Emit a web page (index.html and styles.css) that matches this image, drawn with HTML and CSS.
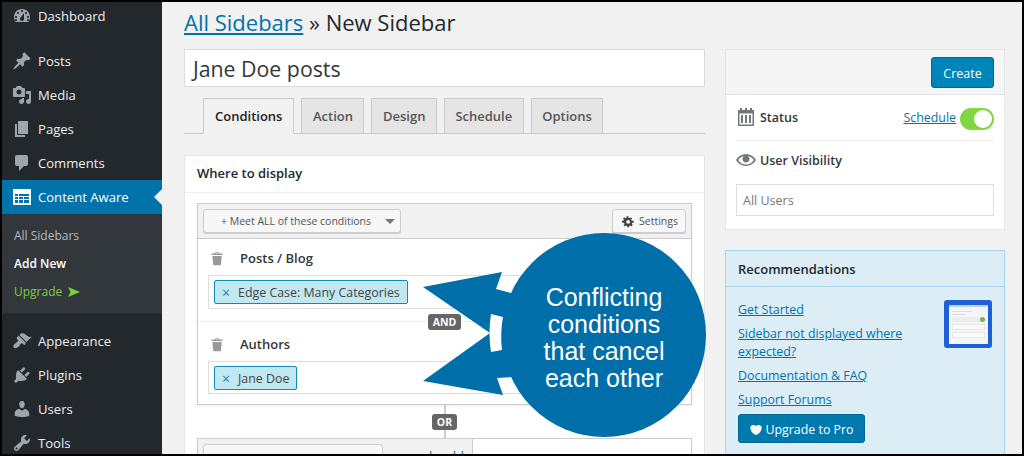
FILE: index.html
```html
<!DOCTYPE html>
<html lang="en">
<head>
<meta charset="utf-8">
<title>New Sidebar</title>
<link rel="stylesheet" href="styles.css">
</head>
<body>
<div class="frame">
  <nav class="sidebar">
    <ul class="menu menu-top">
      <li class="item"><svg class="mi" viewBox="0 0 20 20"><path fill-rule="evenodd" d="M3.76 16h12.48c1.1-1.37 1.76-3.11 1.76-5 0-4.42-3.58-8-8-8s-8 3.58-8 8c0 1.89.66 3.63 1.76 5zM10 4c.55 0 1 .45 1 1s-.45 1-1 1-1-.45-1-1 .45-1 1-1zM6 6c.55 0 1 .45 1 1s-.45 1-1 1-1-.45-1-1 .45-1 1-1zm8 0c.55 0 1 .45 1 1s-.45 1-1 1-1-.45-1-1 .45-1 1-1zm-5.37 5.55L12 7v6c0 1.1-.9 2-2 2s-2-.9-2-2c0-.57.24-1.08.63-1.45zM4 10c.55 0 1 .45 1 1s-.45 1-1 1-1-.45-1-1 .45-1 1-1zm12 0c.55 0 1 .45 1 1s-.45 1-1 1-1-.45-1-1 .45-1 1-1zm-12 3c.55 0 1 .45 1 1s-.45 1-1 1-1-.45-1-1 .45-1 1-1zm12 0c.55 0 1 .45 1 1s-.45 1-1 1-1-.45-1-1 .45-1 1-1z"/></svg><span>Dashboard</span></li>
    </ul>
    <ul class="menu">
      <li class="item"><svg class="mi" viewBox="0 0 20 20"><path d="M10.44 3.02l1.82-1.82 6.36 6.35-1.83 1.82c-1.05-.68-2.48-.57-3.41.36l-.75.75c-.92.93-1.04 2.35-.35 3.41l-1.83 1.82-2.41-2.41-2.8 2.79c-.42.42-3.38 2.71-3.8 2.29s1.86-3.39 2.28-3.81l2.79-2.79L4.1 9.36l1.83-1.82c1.05.69 2.48.57 3.4-.36l.75-.75c.93-.92 1.05-2.35.36-3.41z"/></svg><span>Posts</span></li>
      <li class="item"><svg class="mi" viewBox="0 0 20 20"><path fill-rule="evenodd" d="M13 11V4c0-.55-.45-1-1-1h-1.67L9 1H5L3.67 3H2c-.55 0-1 .45-1 1v7c0 .55.45 1 1 1h10c.55 0 1-.45 1-1zM7 4.5c1.38 0 2.5 1.12 2.5 2.5S8.38 9.5 7 9.5 4.5 8.38 4.5 7 5.62 4.5 7 4.5zM14 6h5v10.5c0 1.38-1.12 2.5-2.5 2.5S14 17.88 14 16.5s1.12-2.5 2.5-2.5c.17 0 .34.02.5.05V9h-3V6zm-4 8.05V13h2v3.5c0 1.38-1.12 2.5-2.5 2.5S7 17.88 7 16.5 8.12 14 9.5 14c.17 0 .34.02.5.05z"/></svg><span>Media</span></li>
      <li class="item"><svg class="mi" viewBox="0 0 20 20"><path d="M6 15V2h10v13H6zm-1 1h8v2H3V5h2v11z"/></svg><span>Pages</span></li>
      <li class="item"><svg class="mi" viewBox="0 0 20 20"><path d="M5 2h9c1.1 0 2 .9 2 2v7c0 1.1-.9 2-2 2h-2l-5 5v-5H5c-1.1 0-2-.9-2-2V4c0-1.1.9-2 2-2z"/></svg><span>Comments</span></li>
      <li class="item item-active"><svg class="mi" viewBox="0 0 20 20"><path fill-rule="evenodd" d="M1 2h18v16H1zM3 7v2h3V7zM7 7v2h10V7zM3 10v2h3v-2zM7 10v2h4v-2zM12 10v2h5v-2zM3 13v3h3v-3zM7 13v3h4v-3zM12 13v3h5v-3z"/></svg><span>Content Aware</span></li>
    </ul>
    <ul class="submenu">
      <li class="sub">All Sidebars</li>
      <li class="sub sub-current">Add New</li>
      <li class="sub sub-upgrade">Upgrade <svg class="up-arrow" viewBox="0 0 12 10"><path d="M0 0l12 5-12 5 2.5-5z"/></svg></li>
    </ul>
    <ul class="menu menu-lower">
      <li class="item"><svg class="mi" viewBox="0 0 20 20"><path d="M14.48 11.06L7.41 3.99l1.5-1.5c.5-.56 2.3-.47 3.51.32 1.21.8 1.43 1.28 2.91 2.1 1.18.64 2.45 1.26 4.45.85zm-.71.71L6.7 4.7 4.93 6.47c-.39.39-.39 1.02 0 1.41l1.06 1.06c.39.39.39 1.03 0 1.42-.6.6-1.43 1.11-2.21 1.69-.35.26-.7.53-1.01.84C1.43 13.23.91 15.8 1.82 16.71c.9.9 3.47.38 4.8-.95.31-.31.58-.66.84-1.01.58-.78 1.09-1.61 1.69-2.21.39-.39 1.02-.39 1.41 0l1.06 1.06c.39.39 1.02.39 1.41 0z"/></svg><span>Appearance</span></li>
      <li class="item"><svg class="mi" viewBox="0 0 20 20"><path d="M13.11 4.36L9.87 7.6 8 5.73l3.24-3.24c.35-.34 1.05-.2 1.56.32.52.51.66 1.21.31 1.55zm-8 1.77l.91-1.12 9.01 9.01-1.19.84c-.71.71-2.63 1.16-3.82 1.16H6.14L4.9 17.26c-.59.59-1.54.59-2.12 0-.59-.58-.59-1.53 0-2.12l1.24-1.24v-3.88c0-1.13.4-3.19 1.09-3.89zm7.26 3.97l3.24-3.24c.34-.35 1.04-.21 1.55.31.52.51.66 1.21.31 1.55l-3.24 3.25z"/></svg><span>Plugins</span></li>
      <li class="item"><svg class="mi" viewBox="0 0 20 20"><path d="M10 9.25c-2.27 0-2.73-3.44-2.73-3.44C7 4.02 7.82 2 9.97 2c2.16 0 2.98 2.02 2.71 3.81 0 0-.41 3.44-2.68 3.44zm0 2.57L12.72 10c2.39 0 4.52 2.33 4.52 4.53v2.49s-3.65 1.13-7.24 1.13c-3.65 0-7.24-1.13-7.24-1.13v-2.49c0-2.25 1.94-4.48 4.47-4.48z"/></svg><span>Users</span></li>
      <li class="item"><svg class="mi" viewBox="0 0 20 20"><path fill-rule="evenodd" d="M16.68 9.77c-1.34 1.34-3.3 1.67-4.95.99l-5.41 6.52c-.99.99-2.59.99-3.58 0s-.99-2.59 0-3.57l6.52-5.42c-.68-1.65-.35-3.61.99-4.95 1.28-1.28 3.12-1.62 4.72-1.06l-2.89 2.89 2.82 2.82 2.86-2.87c.53 1.58.18 3.39-1.08 4.65zM3.81 16.21c.4.39 1.04.39 1.43 0 .4-.4.4-1.04 0-1.43-.39-.4-1.03-.4-1.43 0-.39.39-.39 1.03 0 1.43z"/></svg><span>Tools</span></li>
    </ul>
  </nav>

  <main class="main">
    <section class="editor">
      <h1 class="page-title"><a class="link" href="#">All Sidebars</a> » New Sidebar</h1>
      <div class="title-field">Jane Doe posts</div>
      <div class="tabs">
        <span class="tab tab-active">Conditions</span>
        <span class="tab">Action</span>
        <span class="tab">Design</span>
        <span class="tab">Schedule</span>
        <span class="tab">Options</span>
      </div>
      <div class="card">
        <h2 class="card-title">Where to display</h2>
        <div class="card-body">
          <div class="group">
            <div class="group-bar">
              <span class="btn btn-meet">+ Meet ALL of these conditions<i class="caret"></i></span>
              <span class="btn btn-settings"><svg class="gear" viewBox="0 0 20 20"><path fill-rule="evenodd" d="M18 12h-2.18c-.17.7-.44 1.35-.81 1.93l1.54 1.54-2.1 2.1-1.54-1.54c-.58.36-1.23.63-1.91.79V19H8v-2.18c-.68-.16-1.33-.43-1.91-.79l-1.54 1.54-2.12-2.12 1.54-1.54c-.36-.58-.63-1.23-.79-1.91H0V9.03h2.17c.16-.7.44-1.35.8-1.94L1.43 5.55l2.1-2.1 1.54 1.54c.58-.37 1.24-.64 1.93-.81V2h3v2.18c.68.16 1.33.43 1.91.79l1.54-1.54 2.12 2.12-1.54 1.54c.36.59.64 1.24.8 1.94H18V12zm-8.5 1.5c1.66 0 3-1.34 3-3s-1.34-3-3-3-3 1.34-3 3 1.34 3 3 3z"/></svg>Settings</span>
            </div>
            <div class="cond">
              <div class="cond-title"><svg class="trash" viewBox="0 0 20 20"><path fill-rule="evenodd" d="M12 4h3c.6 0 1 .4 1 1v1H3V5c0-.6.5-1 1-1h3c.2-1.1 1.3-2 2.5-2s2.3.9 2.5 2zM8 4h3c-.2-.6-.9-1-1.5-1S8.2 3.4 8 4zM4 7h11l-.9 10.1c0 .5-.5.9-1 .9H5.9c-.5 0-.9-.4-1-.9L4 7z"/></svg>Posts / Blog</div>
              <div class="cond-box"><span class="tag"><i class="tag-x">×</i>Edge Case: Many Categories</span></div>
            </div>
            <div class="cond cond-next">
              <span class="badge badge-and">AND</span>
              <div class="cond-title"><svg class="trash" viewBox="0 0 20 20"><path fill-rule="evenodd" d="M12 4h3c.6 0 1 .4 1 1v1H3V5c0-.6.5-1 1-1h3c.2-1.1 1.3-2 2.5-2s2.3.9 2.5 2zM8 4h3c-.2-.6-.9-1-1.5-1S8.2 3.4 8 4zM4 7h11l-.9 10.1c0 .5-.5.9-1 .9H5.9c-.5 0-.9-.4-1-.9L4 7z"/></svg>Authors</div>
              <div class="cond-box"><span class="tag"><i class="tag-x">×</i>Jane Doe</span></div>
            </div>
          </div>
          <div class="connector"><span class="badge badge-or">OR</span></div>
          <div class="group group-second">
            <div class="group-left"><span class="btn btn-wide"></span><span class="cut-text">should</span></div>
          </div>
        </div>
      </div>
    </section>

    <aside class="side">
      <div class="panel">
        <div class="panel-head"><span class="btn-primary">Create</span></div>
        <div class="status-row">
          <svg class="cal" viewBox="0 0 18 18"><path fill-rule="evenodd" d="M3 0h2v2h3V0h2v2h3V0h2v2h2v16H1V2h2zM2.500 5.500v11h13v-11zM4 7h2v8H4zM8 7h2v8H8zM12 7h2v8h-2z"/></svg>
          <span class="lbl">Status</span>
          <a class="link sched" href="#">Schedule</a>
          <span class="toggle"><i class="knob"></i></span>
        </div>
        <div class="vis-row">
          <svg class="eye" viewBox="0 0 20 20"><path fill-rule="evenodd" d="M19.700 9.400C17.700 6 14 3.900 10 3.900S2.300 6 .3 9.400L0 10l.3.6c2 3.400 5.700 5.500 9.700 5.500s7.700-2.100 9.700-5.500l.3-.6zM10 14.600c-3.100 0-6-1.600-7.700-4.600C3.600 8 5.700 6.600 8 6.100 7.100 6.700 6.500 7.800 6.500 9c0 1.900 1.600 3.500 3.500 3.500s3.500-1.600 3.500-3.500c0-1.200-.6-2.300-1.500-2.900 2.300.5 4.400 1.900 5.700 3.900-1.700 3-4.600 4.600-7.700 4.600z"/></svg>
          <span class="lbl">User Visibility</span>
        </div>
        <div class="select">All Users</div>
      </div>

      <div class="panel panel-blue">
        <h2 class="panel-title">Recommendations</h2>
        <div class="rec-body">
          <div class="rec-links">
            <a class="link" href="#">Get Started</a>
            <a class="link" href="#">Sidebar not displayed where expected?</a>
            <a class="link" href="#">Documentation &amp; FAQ</a>
            <a class="link" href="#">Support Forums</a>
            <span class="btn-primary btn-pro"><svg class="heart" viewBox="0 0 20 20"><path d="M10 17.120c3.330-1.400 5.740-3.790 7.040-6.210 1.280-2.410 1.460-4.810.32-6.250-1.030-1.290-2.370-1.780-3.730-1.740s-2.680.63-3.630 1.460c-.95-.83-2.270-1.420-3.630-1.460s-2.700.45-3.730 1.740c-1.140 1.440-.96 3.840.34 6.250 1.280 2.420 3.690 4.810 7.020 6.210z"/></svg>Upgrade to Pro</span>
          </div>
          <div class="thumb">
            <div class="thumb-screen">
              <i class="thumb-line thumb-line-a"></i>
              <i class="thumb-line thumb-line-b"></i>
              <i class="thumb-bar"><b class="thumb-dot"></b></i>
              <i class="thumb-input"></i>
              <i class="thumb-input"></i>
            </div>
          </div>
        </div>
      </div>
    </aside>

    <div class="callout">
      <svg class="callout-art" viewBox="423 233 283 204">
        <circle class="blue" cx="604" cy="335" r="102"/>
        <path class="blue" d="M423 287L502 272 496 289 511 293 530 300 530 370 512 377 497 378 503 395 423 381 490 333z"/>
        <path class="gap" d="M491 314L503 317Q500 333 502 350L491 352Q488 333 491 314z"/>
      </svg>
      <p class="callout-text">Conflicting<br>conditions<br>that cancel<br>each other</p>
    </div>
  </main>
</div>
</body>
</html>
```
FILE: styles.css
```css
* { box-sizing: border-box; }
html, body { margin: 0; padding: 0; }
body { font-family: "Open Sans", "Noto Sans", sans-serif; font-size: 13px; color: #444; }
ul { list-style: none; margin: 0; padding: 0; }
h1, h2, p { margin: 0; }
i { font-style: normal; }

.frame { display: flex; width: 1024px; height: 456px; border: 2px solid #000; background: #f1f1f1; overflow: hidden; }

/* Admin menu */
.sidebar { flex: 0 0 160px; background: #23282d; color: #eee; }
.menu-top { margin-top: -3px; margin-bottom: 11px; }
.menu-lower { margin-top: 11px; }
.item { display: flex; align-items: center; height: 34px; padding-left: 10px; font-size: 13.1px; color: #eee; }
.mi { width: 20px; height: 20px; margin-right: 6px; fill: #a0a5aa; flex: none; }
.item-active { background: #0073aa; color: #fff; position: relative; }
.item-active .mi { fill: #fff; }
.item-active::after { content: ""; position: absolute; right: 0; top: 9px; border: 8px solid transparent; border-left-width: 0; border-right-color: #f1f1f1; }
.submenu { background: #32373c; padding: 8px 0 7px; }
.sub { height: 28px; line-height: 28px; padding-left: 12px; font-size: 12px; color: #b4b9be; }
.sub-current { color: #fff; font-weight: 600; }
.sub-upgrade { color: #7ad03a; display: flex; align-items: center; gap: 6px; }
.up-arrow { width: 12px; height: 10px; fill: #7ad03a; }

/* Main */
.main { position: relative; flex: 1; display: flex; gap: 20px; padding-left: 22px; min-width: 0; }
.editor { flex: 0 0 521px; }
.side { flex: 0 0 280px; padding-top: 47px; }
.link { color: #0073aa; text-decoration: underline; }
.page-title { font-size: 22px; font-weight: 400; line-height: 41px; margin-bottom: 6px; color: #23282d; white-space: nowrap; }
.title-field { height: 38px; line-height: 38px; padding-left: 8px; background: #fff; border: 1px solid #ddd; font-size: 21.300px; color: #32373c; }

.tabs { display: flex; gap: 7px; height: 36px; margin-top: 11px; padding-left: 19px; border-bottom: 1px solid #ccc; }
.tab { height: 36px; line-height: 34px; padding: 0 10.500px; background: #e5e5e5; border: 1px solid #ccc; font-size: 13px; font-weight: 600; color: #555; }
.tab-active { padding: 0 11px; background: #f1f1f1; border-bottom-color: #f1f1f1; color: #222; }

.card { margin-top: 21px; background: #fff; border: 1px solid #e5e5e5; height: 400px; }
.card-title { height: 37px; line-height: 35px; padding-left: 12px; font-size: 13px; font-weight: 600; color: #23282d; border-bottom: 1px solid #eee; }
.card-body { padding: 10px 12px; }

.group { border: 1px solid #ccc; box-shadow: 0 1px 2px rgba(0,0,0,.08); background: #fff; }
.group-bar { display: flex; justify-content: space-between; height: 35px; padding: 5px; background: #f1f1f1; border-bottom: 1px solid #ccc; }
.btn { display: inline-flex; align-items: center; height: 24px; background: #f7f7f7; border: 1px solid #ccc; border-radius: 3px; box-shadow: 0 1px 0 #ccc; font-size: 10.500px; color: #555; white-space: nowrap; }
.btn-meet { width: 198px; padding: 0 5px 0 17px; justify-content: space-between; }
.caret { border: 5px solid transparent; border-top-color: #777; border-bottom-width: 0; }
.btn-settings { width: 74px; padding-left: 9px; gap: 4px; }
.gear { width: 13px; height: 13px; fill: #444; }

.cond { position: relative; padding: 9px 10px 12px; }
.cond-next { border-top: 1px dotted #ddd; padding-top: 12px; padding-bottom: 10px; }
.cond-title { display: flex; align-items: center; height: 20px; font-size: 13px; font-weight: 600; color: #32373c; }
.trash { width: 17px; height: 17px; margin: 0 14px 0 1px; fill: #999; flex: none; }
.cond-box { height: 34px; margin-top: 7px; padding: 4px 5px; background: #fff; border: 1px solid #ddd; }
.cond-next .cond-box { height: 33px; }
.tag { display: inline-flex; align-items: center; height: 24px; padding: 0 7px; background: #c1e7f1; border: 1px solid #0f8ab5; border-radius: 2px; font-size: 12.400px; color: #444; }
.tag-x { margin-right: 8px; color: #2b7ea8; font-size: 14px; }
.badge { display: inline-block; height: 16px; line-height: 16px; background: #666; border-radius: 3px; color: #fff; font-size: 10.500px; font-weight: 700; text-align: center; }
.badge-or { width: 25px; }
.badge-and { position: absolute; top: -8px; left: 230px; width: 33px; }
.connector { display: flex; align-items: center; justify-content: center; height: 33px; background: linear-gradient(#ccc, #ccc) center / 2px 100% no-repeat; }
.group-second { height: 100px; }
.group-left { position: relative; width: 275px; height: 100%; padding: 5px; background: #f1f1f1; border-right: 1px solid #ccc; }
.btn-wide { width: 180px; }
.cut-text { position: absolute; right: 8px; top: 8px; font-size: 13px; color: #0073aa; }

/* Right column */
.panel { background: #fff; border: 1px solid #e5e5e5; padding-bottom: 13px; }
.panel-head { display: flex; justify-content: flex-end; height: 45px; padding: 7px 10px 0; background: #f5f5f5; border-bottom: 1px solid #e5e5e5; }
.btn-primary { display: inline-flex; align-items: center; justify-content: center; width: 63px; height: 31px; padding-top: 2px; background: #0085ba; border: 1px solid #006799; border-radius: 3px; color: #fff; font-size: 12.500px; }
.status-row { display: flex; align-items: flex-start; height: 33px; margin: 13px 10px 0; border-bottom: 1px solid #eee; }
.cal { width: 18px; height: 18px; fill: #72777c; margin: 0 5px 0 1px; }
.lbl { padding-top: 1px; line-height: 18px; font-size: 12.500px; font-weight: 600; color: #32373c; }
.sched { padding-top: 1px; line-height: 18px; margin-left: auto; margin-right: 4px; font-size: 12.400px; }
.toggle { display: flex; align-items: center; justify-content: flex-end; width: 34px; height: 22px; padding-right: 2px; background: #81d742; border-radius: 11px; }
.knob { width: 18px; height: 18px; background: #fff; border-radius: 50%; }
.vis-row { display: flex; align-items: center; height: 20px; margin: 9px 10px 0; }
.eye { width: 20px; height: 20px; fill: #72777c; margin-right: 4px; }
.select { height: 32px; line-height: 32px; margin: 14px 10px 0; padding-left: 6px; border: 1px solid #ddd; font-size: 12.500px; color: #777; }

.panel-blue { margin-top: 20px; height: 260px; background: #dcedf6; border-color: #a4d6ef; }
.panel-title { height: 36px; line-height: 36px; padding-left: 12px; font-size: 13px; font-weight: 600; color: #23282d; border-bottom: 1px solid #a4d6ef; }
.rec-body { display: flex; justify-content: space-between; padding: 13px 12px 0; }
.rec-links { display: flex; flex-direction: column; align-items: flex-start; gap: 6px; width: 180px; font-size: 12.400px; line-height: 18px; }
.rec-links .link { padding-top: 1px; margin-bottom: -1px; }
.btn-pro { width: 127px; height: 29px; gap: 2px; background: #0079ad; font-size: 12.400px; }
.heart { width: 14px; height: 14px; fill: #fff; }
.thumb { width: 48px; height: 48px; padding: 5px 4px 4px 5px; background: #1f5fd8; border-radius: 3px; }
.thumb-screen { display: flex; flex-direction: column; gap: 2px; height: 100%; padding: 4px 3px; background: #f3f6f8; border-top: 2px solid #bcd4e6; }
.thumb-line { display: block; height: 1px; background: #d5dde3; }
.thumb-line-a { width: 60%; }
.thumb-line-b { width: 40%; }
.thumb-bar { display: flex; justify-content: flex-end; height: 5px; background: #ececec; }
.thumb-dot { width: 5px; height: 5px; background: #81b342; border-radius: 50%; }
.thumb-input { display: block; height: 6px; border: 1px solid #e8e8e8; background: #fafafa; }

/* Annotation over the page */
.callout { position: absolute; left: 261px; top: 231px; width: 283px; height: 204px; }
.callout-art { display: block; width: 283px; height: 204px; }
.blue { fill: #006ea8; }
.gap { fill: #fff; }
.callout-text { position: absolute; left: 79px; top: 0; width: 204px; height: 204px; padding-top: 5px; display: flex; align-items: center; justify-content: center; text-align: center; font-family: "Liberation Sans", Arial, sans-serif; font-size: 25px; line-height: 27px; color: #fff; }
```
